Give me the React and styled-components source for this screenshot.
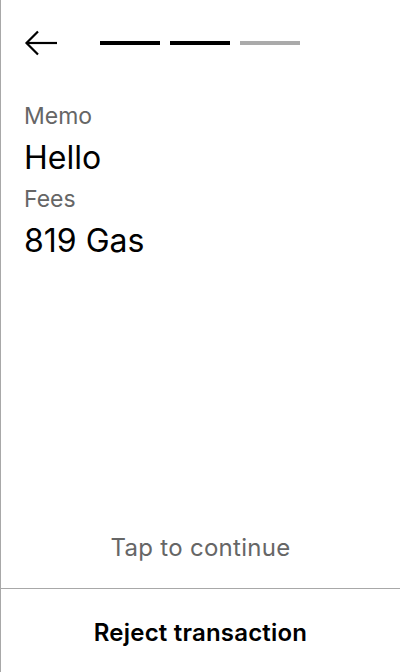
import React from "react";
import styled, { createGlobalStyle } from "styled-components";

const Global = createGlobalStyle`
  html, body { margin: 0; padding: 0; background: #fff; }
  body { font-family: Inter, "Noto Sans", sans-serif; -webkit-font-smoothing: antialiased; }
`;

const Screen = styled.div`
  box-sizing: border-box;
  width: 400px;
  height: 672px;
  border-left: 1px solid #a8a8a8;
  display: flex;
  flex-direction: column;
  color: #000;
`;

const Header = styled.div`
  display: flex;
  align-items: center;
  padding: 30px 23px 0;
  height: 26px;
`;

const BackButton = styled.button`
  border: 0;
  background: none;
  padding: 0;
  width: 34px;
  height: 26px;
  display: flex;
  align-items: center;
  cursor: pointer;
`;

const Steps = styled.div`
  display: flex;
  gap: 10px;
  margin-left: 42px;
`;

const Step = styled.div`
  width: 60px;
  height: 4px;
  background: ${(p) => (p.$done ? "#000" : "#aaaaaa")};
`;

const Content = styled.div`
  flex: 1;
  padding: 44px 23px 0;
  display: flex;
  flex-direction: column;
`;

const Label = styled.div`
  font-size: 23px;
  line-height: 32px;
  color: #666;
`;

const Value = styled.div`
  font-size: 32px;
  line-height: 51px;
`;

const Hint = styled.div`
  text-align: center;
  font-size: 24px;
  letter-spacing: 0.3px;
  color: #666;
  line-height: 30px;
  padding-bottom: 25px;
`;

const Footer = styled.button`
  border: 0;
  border-top: 1px solid #a8a8a8;
  background: none;
  height: 84px;
  width: 100%;
  font-family: Inter, "Noto Sans", sans-serif;
  font-size: 24px;
  font-weight: 600;
  letter-spacing: 0.2px;
  color: #000;
  padding: 3px 0 0;
  cursor: pointer;
`;

export default function App() {
  return (
    <>
      <Global />
      <Screen>
        <Header>
          <BackButton aria-label="Back">
            <svg width="34" height="26" viewBox="0 0 34 26" fill="none" stroke="#000" strokeWidth="2.2">
              <path d="M33 13H2.5" />
              <path d="M14 1.5L2.5 13L14 24.5" />
            </svg>
          </BackButton>
          <Steps>
            <Step $done />
            <Step $done />
            <Step />
          </Steps>
        </Header>
        <Content>
          <Label>Memo</Label>
          <Value>Hello</Value>
          <Label>Fees</Label>
          <Value>819 Gas</Value>
        </Content>
        <Hint>Tap to continue</Hint>
        <Footer>Reject transaction</Footer>
      </Screen>
    </>
  );
}
